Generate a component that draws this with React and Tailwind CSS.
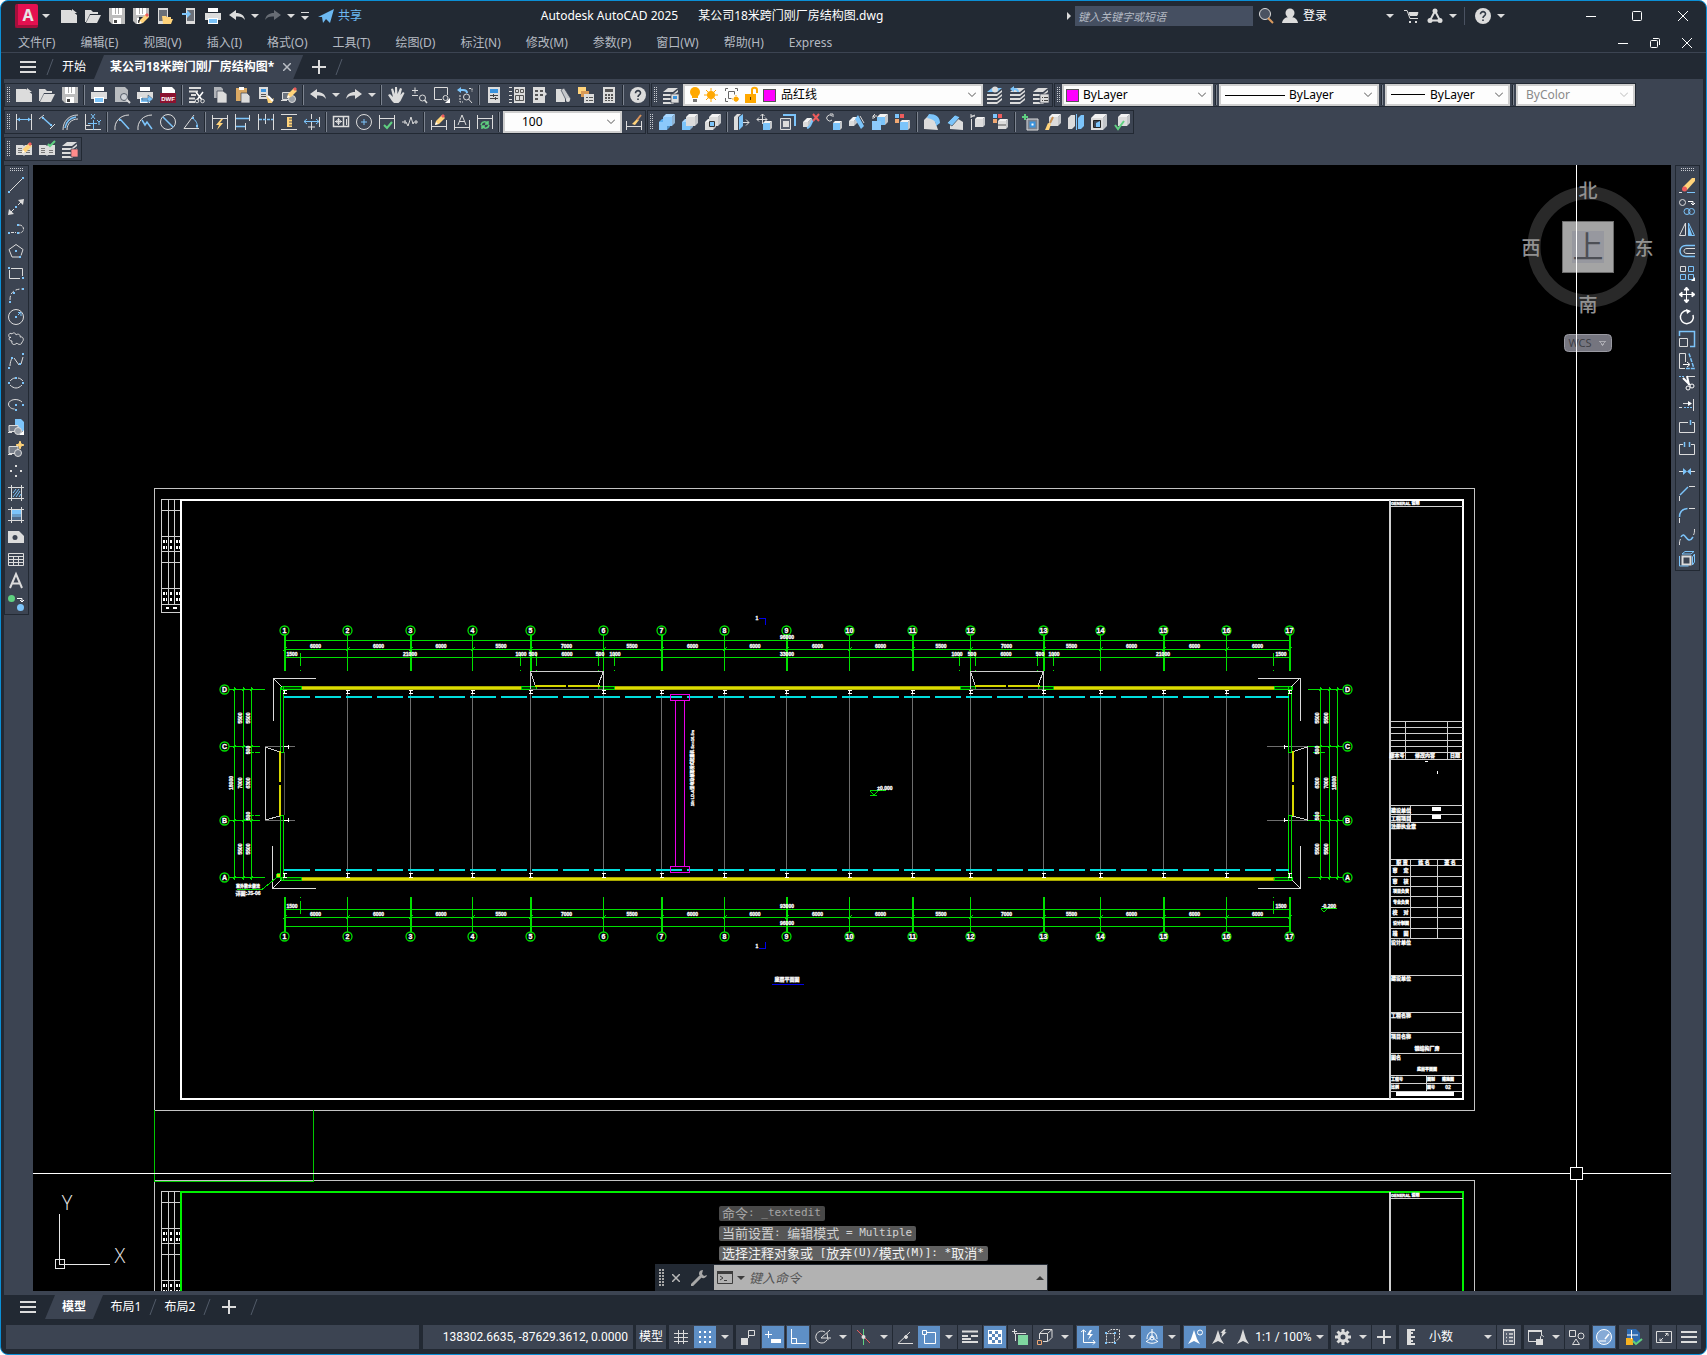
import { useState } from "react";
import clsx from "clsx";

const L = "#dcdcdc";
const B = "#7cc4fa";
const Y = "#ffd37a";
const R = "#ee5c5c";
const G = "#5fd080";
const D = "#3c4452";

/* ---------- icon building blocks ---------- */

function Cube({ x = 1, y = 4, s = 9, d = 4, c = L, side = "#f2f2f2" }) {
  return (
    <g stroke="none">
      <path d={`M${x} ${y}h${s}v${s}h${-s}z`} fill={c} />
      <path d={`M${x} ${y}l${d} ${-d}h${s}l${-d} ${d}z`} fill={side} />
      <path d={`M${x + s} ${y}l${d} ${-d}v${s}l${-d} ${d}z`} fill={side} opacity="0.75" />
    </g>
  );
}

function Stack({ top = L }) {
  return (
    <g stroke="none" fill={L}>
      <path d="M5 1h10l-5 4H0z" fill={top} />
      <path d="M0 7h10l5-4v2l-5 4H0z" />
      <path d="M0 11h10l5-4v2l-5 4H0z" />
      <path d="M0 15h10l5-4v2l-5 4H0z" />
    </g>
  );
}

function Pencil() {
  return (
    <g stroke="none">
      <path d="M6 12l1-4 6-6 3 3-6 6z" fill={Y} />
      <path d="M12 3l2-2 2 2-2 2z" fill={R} />
      <path d="M6 12l1-3 2 2z" fill="#fff" />
    </g>
  );
}

function Dots({ at, c = B }) {
  return at.map(([x, y]) => <path key={`${x}-${y}`} d={`M${x - 1} ${y - 1}h2v2h-2z`} fill={c} stroke="none" />);
}

const printer = (
  <g stroke="none">
    <path d="M3 0h10v4H3z" fill="#fff" />
    <path d="M0 5h16v7H0z" fill={L} />
    <path d="M3 10h10v6H3z" fill="#fff" />
    <path d="M4 11h8v4H4z" fill={B} />
  </g>
);

const disk = (
  <g stroke="none">
    <path d="M0 0h16v16H3l-3-3z" fill="#bdbdbd" />
    <path d="M3 0h10v7H3z" fill="#fff" />
    <path d="M6 0h1v6H6zM9 0h1v6H9z" fill="#aaa" />
    <path d="M4 10h8v6H4z" fill="#fff" />
    <path d="M5 12h3v3H5z" fill="#444" />
  </g>
);

const lens = (
  <g>
    <circle cx="10" cy="10" r="3.5" fill="#cfd3d8" stroke="#555d69" />
    <path d="M12.500 12.500L16 16" strokeWidth="2" />
  </g>
);

const bracket = <path d="M.5 1v14M15.500 1v14M1 4.500h14" />;

const ICONS = {
  new: <path d="M0 2h10l6 5v8H0z M11 1l5 4h-5z" fill={L} stroke="none" />,
  open: <path d="M0 2h6l2 2h5v2H5l-4 8H0z M5 7h11l-4 8H1z" fill={L} stroke="none" />,
  save: disk,
  saveAs: (
    <g>
      {disk}
      <path d="M6 9h10v7H6z" fill="#222933" stroke="none" />
      <g transform="translate(0 4)"><Pencil /></g>
    </g>
  ),
  openPhone: (
    <g stroke="none">
      <path d="M1 0h10v16H1z" fill={L} />
      <path d="M2 2h8v11H2z" fill="#6b7078" />
      <path d="M5 8h4l1 1h4v2h2l-2 5H6z" fill={Y} />
    </g>
  ),
  savePhone: (
    <g stroke="none">
      <path d="M5 0h9v16H5z" fill={L} />
      <path d="M6 2h7v11H6z" fill="#6b7078" />
      <path d="M1 5h5V2l4 4-4 4V7H1z" fill={B} />
    </g>
  ),
  print: printer,
  preview: <g><path d="M1 0h10l3 3v12H1z" fill="#b9bcc0" stroke="none" />{lens}</g>,
  publish: <g>{printer}<path d="M5 11h6V8l5 4-5 4v-3H5z" fill={B} stroke={D} strokeWidth=".5" /></g>,
  dwf: (
    <g stroke="none">
      <path d="M2 0h10l3 3v6H2z" fill="#fff" />
      <path d="M0 6h16v10H0z" fill="#8b1230" />
      <text x="8" y="14" textAnchor="middle" fontSize="6" fontWeight="700" fill="#fff" fontFamily="Liberation Sans">DWF</text>
    </g>
  ),
  cut: (
    <g>
      <path d="M0 1h12M0 4.500h9M2 8h5M0 11.500h6M0 15h6" strokeWidth="2" />
      <path d="M7 5l6 8M14 5l-6 8" stroke="#fff" strokeWidth="1.500" />
      <circle cx="8" cy="14" r="1.800" /><circle cx="13.500" cy="14" r="1.800" />
    </g>
  ),
  copy: <g stroke="none"><path d="M2 0h7l2 2v9H2z" fill="#b0b3b8" /><path d="M5 4h6l4 3v9H5z" fill={L} stroke={D} strokeWidth=".7" /></g>,
  paste: <g stroke="none"><path d="M1 1h11v13H1z" fill="#dba964" /><path d="M4 0h5v3H4z" fill="#fff" /><path d="M6 6h6l3 3v7H6z" fill={L} stroke={D} strokeWidth=".7" /></g>,
  match: <g stroke="none"><path d="M1 0h9v12H1z" fill={L} /><path d="M3 2h5v3H3z" fill="#3a93dd" /><path d="M3 7h5v1H3zM3 9h5v1H3z" fill="#555" /><path d="M8 8l5 5 3-2-2 5h-4z" fill={Y} /><path d="M10 9l5 5" stroke="#fff" strokeWidth="2" /></g>,
  blockEdit: <g><path d="M1.500 5.500h8v7h-8zM0 13.500h6" fill="#6d7480" /><circle cx="11" cy="12" r="3.500" fill="#9aa0a8" /><g transform="translate(0 -1)"><Pencil /></g></g>,
  undo: <path d="M7 2v3c5 0 8 2 9 7-2-3-5-4-9-3.500V12L0 7z" fill={L} stroke="none" />,
  redo: <path d="M9 2v3C4 5 1 7 0 12c2-3 5-4 9-3.500V12l7-5z" fill={L} stroke="none" />,
  redoOff: <path d="M9 2v3C4 5 1 7 0 12c2-3 5-4 9-3.500V12l7-5z" fill="#676c74" stroke="none" />,
  pan: <path d="M4 14L0 8l2-1 3 3-2-8 2-.5L7 7V0h2l.5 7L12 1l2 .7L12.500 8 15 5l1.500 1-4 8-2 2H6z" fill={L} stroke="none" />,
  zoomRt: <g><path d="M1 3.500h6M4 .5v6M1 8.500h6" /><circle cx="11.500" cy="11" r="3" /><path d="M13.500 13L16 16" strokeWidth="1.500" /></g>,
  zoomWin: <g><path d="M8 12.500H.5V.5h13V8" /><circle cx="11.500" cy="11" r="2.500" /><path d="M16 11v5h-5z" fill="#fff" stroke="none" /></g>,
  zoomPrev: <g><path d="M1 3h5c3 0 4 1 4 3" stroke={B} strokeWidth="2" /><path d="M0 3l4-3v6z" fill={B} stroke="none" /><path d="M3 8v7h3M12 1.500h3V5" strokeDasharray="2 1" /><circle cx="9.500" cy="10" r="3" /><path d="M11.500 12L15 16" /></g>,
  props: <g stroke="none"><path d="M2 0h12v16H2z" fill={L} /><path d="M4 2h8v4H4z" fill="#3a93dd" /><path d="M4 8h8v1H4zM4 11h8v1H4zM7 7h1v3H7zM9 10h1v3H9z" fill="#444" /></g>,
  design: <g><path d="M3 .5H0M3 4.500H0M3 8.500H0M3 12.500H0M3 15.500H0" /><path d="M5 0h11v16H5z" fill={L} stroke="none" /><path d="M6.500 2.500h3v3h-3zM11.500 2.500h3v3h-3zM6.500 8.500h8v5h-8zM10.500 8.500v5" stroke="#555" /></g>,
  palettes: <g stroke="none"><path d="M1 0h12v5l2 2-2 2v7H1z" fill={L} /><path d="M3 3h3v2H3zM8 3h3v2H8zM3 7h3v2H3zM8 7h3v2H8zM3 11h3v2H3z" fill="#555" /></g>,
  sheetSet: <g stroke="none"><path d="M1 2h6l3 3v10H1z" fill={L} /><path d="M6 3l3-2 7 11-4 3z" fill="#c6c8cb" stroke={D} strokeWidth=".7" /><circle cx="13" cy="13" r="2" fill={L} /></g>,
  markup: <g stroke="none"><path d="M0 0h8v7H0z" fill={Y} /><path d="M3 4h8v6H3z" fill="#d99a55" /><path d="M6 7h10v9H6z" fill={L} /><path d="M8 10h2v1H8zM11 10h4v1h-4zM8 13h2v1H8zM11 13h4v1h-4z" fill="#555" /></g>,
  calc: <g stroke="none"><path d="M2 0h12v16H2z" fill={L} /><path d="M4 2h8v3H4zM4 7h2v2H4zM7 7h2v2H7zM10 7h2v2h-2zM4 10h2v2H4zM7 10h2v2H7zM10 10h2v2h-2zM4 13h2v1H4zM7 13h2v1H7zM10 13h2v1h-2z" fill="#555" /></g>,
  help: <g stroke="none"><circle cx="8" cy="8" r="8" fill={L} /><path d="M5.500 6.200C5.500 2.700 10.700 3 10.500 6 10.400 8 8 7.800 8 10" stroke="#333b47" strokeWidth="1.600" fill="none" /><path d="M7.200 11.500h1.600v1.600H7.200z" fill="#333b47" /></g>,

  layerProps: <g><Stack /><path d="M8 7h8v9H8z" fill={L} stroke={D} strokeWidth=".7" /><path d="M10 9h4v3h-4z" fill="#3a93dd" stroke="none" /></g>,
  layerCurrent: <g><Stack top={B} /><circle cx="8" cy="2.500" r="3" fill={L} stroke="none" /></g>,
  layerPrev: <g><Stack /><path d="M8 5c0-2-2-3-4-3" stroke={B} strokeWidth="2" /><path d="M0 2l4-3v6z" fill={B} stroke="none" /></g>,
  layerStates: <g><Stack /><path d="M7 7h9v9H7z" fill={L} stroke={D} strokeWidth=".7" /><path d="M9 10.500h1M11 10.500h4M9 13.500h1M11 13.500h4" stroke="#444" /></g>,

  dimLinear: <g><path d="M.5 0v16M15.500 0v16" /><path d="M1 5.500h14" stroke={B} /><path d="M1 5.500l3-2v4zM15 5.500l-3-2v4z" fill={B} stroke="none" /></g>,
  dimAligned: <g><path d="M5 1L0 5M16 10l-5 5" /><path d="M3 3l10 9" stroke={B} strokeWidth="1.500" /><Dots at={[[4, 4], [12, 11]]} /></g>,
  dimArc: <g><path d="M1 16C1 7 7 1 16 1M5 16c0-6 4-11 11-11" /><path d="M3 14c1-6 5-10 11-11" stroke={B} strokeWidth="1.500" /></g>,
  dimOrd: <g><path d="M.5 0v15.500H16M.5 11.500h5" /><path d="M8.500 6v10M3 9.500h9M6 0l4 5M10 0L6 5M12 6l2 2 2-2M14 8v3" stroke={B} /></g>,
  dimRadius: <g><path d="M1 16C0 8 6 1 15 1" /><path d="M6 5l9 10" stroke={B} strokeWidth="1.500" /><Dots at={[[6, 6]]} /></g>,
  dimJog: <g><path d="M1 16C0 8 6 1 15 1" /><path d="M5 6l3 5 2-3 5 7" stroke={B} strokeWidth="1.500" /></g>,
  dimDia: <g><circle cx="8" cy="8" r="7.500" /><path d="M3 3l10 10" stroke={B} strokeWidth="1.500" /></g>,
  dimAngular: <g><path d="M11 1L1 14.500h15" /><path d="M9 4c4 2 6 6 5 10" stroke={B} /><Dots at={[[10, 4], [14, 12]]} /></g>,
  dimQuick: <g>{bracket}<path d="M9 5l-5 6h3l-2 5 6-7H8l3-4z" fill={Y} stroke="none" /></g>,
  dimBase: <g><path d="M.5 0v16M14.500 1v6M10.500 9v7" /><path d="M1 4.500h13M1 12.500h9" stroke={B} strokeWidth="1.500" /></g>,
  dimCont: <g><path d="M.5 0v16M7.500 0v10M15.500 0v16" /><path d="M1 5.500h14" stroke={B} strokeDasharray="3 1" strokeWidth="1.500" /></g>,
  dimSpace: <g><path d="M0 .5h16M0 15.500h16" /><path d="M6 3h5v10H6z" fill={Y} stroke="none" /><path d="M8 5h3M8 8h3M8 11h3" stroke="#555" /></g>,
  dimBreak: <g><path d="M7.500 0v5M7.500 8v8M15.500 3v10M4 13h7" /><path d="M0 7.500h15M3 5l-3 2.500L3 10M12 5l3 2.500-3 2.500" stroke={B} /></g>,
  tolerance: <g><path d="M.5 2.500h15v10H.5zM10.500 3v9" strokeWidth="1.500" /><circle cx="5.500" cy="7.500" r="2" /><path d="M2 7.500h7M5.500 4v7M13.500 5v6" /></g>,
  center: <g><circle cx="8" cy="8" r="7.500" /><path d="M8 5v6M5 8h6" stroke={B} /></g>,
  inspect: <g>{bracket}<path d="M5 11l3 3 5-6" stroke={G} strokeWidth="2" /></g>,
  jogLine: <path d="M0 8h4l2 4 3-9 2 7 1-2h4M3 6v4M14 6v4" />,
  dimEdit: <g><path d="M.5 6v10M15.500 6v10M1 12.500h14" /><g transform="translate(-2 -1)"><Pencil /></g></g>,
  dimText: <g><path d="M.5 6v10M15.500 6v10M1 13.500h14M4 11l4-10 4 10M5.500 7.500h5" /></g>,
  dimUpdate: <g>{bracket}<path d="M4 11c1-4 5-4 7-1M12 11c-1 4-5 4-7 1M11 7v3H8M5 15v-3h3" stroke={G} strokeWidth="1.500" /></g>,
  dimStyle: <g><path d="M.5 7v9M15.500 7v9M1 12.500h14" /><path d="M6 10l5-5 2 1-4 5z" fill={Y} stroke="none" /><path d="M11 6l4-5" stroke="#d9935a" strokeWidth="2" /></g>,

  union: <g><Cube x={0} y={8} s={8} d={3} c="#8cc9fb" side="#5aaef0" /><Cube x={4} y={3} s={9} d={3} c="#8cc9fb" side="#a9d8ff" /></g>,
  subtract: <g><Cube x={0} y={8} s={8} d={3} c={B} side="#a9d8ff" /><Cube x={4} y={3} s={9} d={3} /></g>,
  intersect: <g><Cube x={0} y={8} s={8} d={3} /><Cube x={4} y={3} s={9} d={3} /><path d="M4.500 7.500h5v5h-5z" fill={B} stroke="#333" /></g>,
  extrudeFace: <g stroke="none"><path d="M0 3l3-3h4L4 3v13H0z" fill={L} /><path d="M5 3l4-3v12l-4 4z" fill={B} /><path d="M9 8.500h6M12 5.500l3 3-3 3" stroke={L} /></g>,
  moveFace: <g><path d="M5.500 0v10M0 5.500h10M3.500 2l2-2 2 2M8 3.500l2 2-2 2M2 3.500l-2 2 2 2" /><Cube x={6} y={9} s={7} d={2} c={B} /></g>,
  offsetFace: <g><path d="M.5 4.500h10v11H.5z" fill="#596170" /><path d="M3 7h6v6H3z" fill={L} stroke="none" /><path d="M3 1h12v11" stroke={B} strokeWidth="2" /></g>,
  deleteFace: <g><Cube x={0} y={8} s={5} d={4} /><path d="M4 14c4-1 4-6 6-8" stroke={B} strokeWidth="2" /><path d="M10 0l6 7M16 0l-6 7" stroke={R} strokeWidth="2" /></g>,
  rotateFace: <g><path d="M6 2a3 3 0 1 0 0 4M4 0h3v3" /><Cube x={7} y={9} s={7} d={2} c={B} /></g>,
  taperFace: <g><Cube x={0} y={7} s={5} d={4} /><path d="M6 5l3-4 6 11-3 3z" fill={B} stroke="none" /><path d="M11 2l4 7" /></g>,
  copyFace: <g><Cube x={5} y={3} s={8} d={3} c={B} /><Cube x={0} y={7} s={9} d={0} c="#8cc9fb" /><path d="M5 2H1v3M3 0L1 2l2 2" /></g>,
  colorFace: <g><path d="M0 0h4v4H0z" fill={B} stroke="none" /><path d="M5 0h4v4H5z" fill={R} stroke="none" /><path d="M0 5h4v4H0z" fill="#f0a873" stroke="none" /><Cube x={5} y={8} s={8} d={2} c={B} /></g>,
  filletEdge: <g stroke="none"><path d="M0 15V6l5-5 5 3 4 12z" fill={L} /><path d="M5 0c7 0 11 3 11 9l-4 3C12 7 9 5 3 4z" fill={B} /></g>,
  chamferEdge: <g stroke="none"><path d="M3 15V7l5-4 8 5v8z" fill={L} /><path d="M0 9l8-8 5 2-8 9z" fill={B} stroke="#333" strokeWidth=".6" /></g>,
  copyEdge: <g><path d="M1.500 5v11M5 1L1 3M5 2H1M1 0v4" /><Cube x={5} y={5} s={8} d={2} /></g>,
  colorEdge: <g><path d="M0 0h4v4H0z" fill={B} stroke="none" /><path d="M5 0h4v4H5z" fill={R} stroke="none" /><path d="M0 5h4v4H0z" fill="#f0a873" stroke="none" /><Cube x={5} y={7} s={8} d={2} /><path d="M5 11h8" stroke="#555" /></g>,
  imprint: <g><path d="M5 5h11v11H5z" fill="#7b828e" stroke={L} /><path d="M8.500 8.500h4v4h-4z" fill="#fff" stroke="#3a93dd" strokeWidth="2" /><path d="M3 0v6M0 3h6" stroke={G} strokeWidth="2" /></g>,
  clean: <g><Cube x={4} y={3} s={9} d={3} /><path d="M3 9l3 1-2 6H0z" fill={Y} stroke="none" /><path d="M5 9l3-6" stroke="#c89052" strokeWidth="2" /></g>,
  separate: <g stroke="none"><path d="M0 4l3-3h4v11l-3 3H0z" fill={L} /><path d="M10 4l3-3h3v11l-3 3h-3z" fill={B} /><path d="M8.500 0v16" stroke={B} /></g>,
  shell: <g><Cube x={0} y={4} s={12} d={4} /><path d="M2.500 6.500h7v7h-7z" fill={D} stroke="#222" /><path d="M5 9l4-2v6H5z" fill={B} stroke="none" /></g>,
  check: <g><Cube x={4} y={3} s={9} d={3} /><path d="M1 11l3 4 6-8" stroke={G} strokeWidth="2" /></g>,

  bookEdit: <g><path d="M0 4h7l1 1 1-1h7v10H9l-1 1-1-1H0z" fill={L} stroke="none" /><path d="M2 7.500h4M2 9.500h4M2 11.500h4M10 9.500h4M10 11.500h4" stroke="#777" /><Pencil /></g>,
  bookCheck: <g><path d="M0 4h7l1 1 1-1h7v10H9l-1 1-1-1H0z" fill={L} stroke="none" /><path d="M2 7.500h4M2 9.500h4M2 11.500h4M10 9.500h4M10 11.500h4" stroke="#777" /><path d="M9 3l2 2 5-5" stroke={G} strokeWidth="2" /></g>,
  layerDelete: <g><Stack /><path d="M9 8h7v8H9z" fill="#ff8c8c" stroke={D} strokeWidth=".7" /></g>,

  line: <g><path d="M2 14L14 2" /><Dots at={[[1, 15], [15, 1]]} /></g>,
  xline: <g><path d="M2 14l4-4M10 6l4-4" /><path d="M0 16l1-6 5 5zM16 0l-6 1 5 5z" fill={L} stroke="none" /><Dots at={[[8, 8]]} /></g>,
  pline: <g><path d="M3 11.500h5M11 4c6 0 6 8 0 8" strokeDasharray="3 1" /><Dots at={[[1, 12], [10, 12], [10, 4]]} /></g>,
  polygon: <g><path d="M8 1.500l7 5-2 6M11 14H4L1 6.500l7-5" /><Dots at={[[8, 8], [12, 14]]} /></g>,
  rect: <g><path d="M3 3.500h11.500V11M12 13.500H1.500V5" /><Dots at={[[1, 3], [15, 13]]} /></g>,
  arc: <g><path d="M2 13c0-9 6-11 12-11" strokeDasharray="4 2" /><Dots at={[[2, 15], [6, 6], [15, 2]]} /></g>,
  circle: <g><circle cx="8" cy="8" r="7.500" /><path d="M10 6l3-3M10 3.500h3V7" stroke={B} /><Dots at={[[8, 8]]} /></g>,
  cloud: <path d="M2 7C-1 4 2 1 4 3c1-2 4-1 4 1 2-2 5 0 4 2 4-1 4 4 2 5 0 3-4 3-5 1-3 3-6 1-5-2-3 0-4-3-1-4z" />,
  spline: <g><path d="M2 13c0-3 1-6 2-8M6 5l5 7M13 11l2-7" /><Dots at={[[1, 15], [4, 5], [12, 11], [15, 1]]} /></g>,
  ellipse: <g><path d="M2 6c1-1 3-3 5-3M10 3c2 0 4 2 5 3M2 10c4 4 8 4 12 0" /><Dots at={[[8, 3], [1, 8], [15, 8]]} /></g>,
  ellipseArc: <g><path d="M14 5C10 1 1 2 .5 7c0 3 3 5 6 5" /><Dots at={[[8, 8], [15, 8], [8, 13]]} /></g>,
  insertBlock: <g><path d="M7 0h6l3 3v9H7z" fill={B} stroke="none" /><path d="M1 6.500h9v6H1zM0 13.500h4" fill="#777e8a" /><circle cx="10" cy="12" r="3.500" fill="#9aa0a8" /><path d="M16 11v5h-5z" fill="#fff" stroke="none" /></g>,
  makeBlock: <g><path d="M1 5.500h9v7H1zM0 13.500h4" fill="#777e8a" /><circle cx="10" cy="12" r="3.500" fill="#777e8a" /><path d="M12 0l1 3 3 1-3 1-1 3-1-3-3-1 3-1z" fill={Y} stroke={Y} /></g>,
  point: <Dots c={L} at={[[8, 3], [3, 8], [13, 8], [8, 13]]} />,
  hatch: <g><path d="M3.500 0v16M13.500 0v16M0 2.500h16M0 13.500h16" /><path d="M5 8l3-4M5 12l6-8M8 12l4-6M11 12l2-3" stroke={B} /></g>,
  gradient: <g><path d="M3.500 0v16M13.500 0v16M0 2.500h16M0 13.500h16" /><path d="M4 3h9v4H4z" fill={B} stroke="none" /><path d="M4 7h9v3H4z" fill="#6a9cc6" stroke="none" /><path d="M4 10h9v3H4z" fill="#4f6a88" stroke="none" /></g>,
  region: <g stroke="none"><path d="M0 2h11l5 5v7H0z" fill={L} /><circle cx="7" cy="8.500" r="2.500" fill={D} /></g>,
  table: <path d="M.5 2.500h15v12H.5zM0 5.500h16M0 8.500h16M0 11.500h16M5.500 5v9M10.500 5v9" />,
  mtext: <path d="M2 15L8 1l6 14M4.500 10.500h7" strokeWidth="2" />,
  addSel: <g><circle cx="3.500" cy="3.500" r="3.500" fill={G} stroke="none" /><circle cx="12.500" cy="12.500" r="3.500" fill={B} stroke="none" /><path d="M9 3.500h5V7M12 5l2 2 2-2" stroke="#fff" /></g>,

  erase: <g><path d="M4 10l9-9 3 0v3l-8 9z" fill={Y} stroke="none" /><circle cx="5.500" cy="12" r="2.500" fill={R} stroke="none" /><path d="M0 15.500h3" /><path d="M8 15.500h8" stroke={B} /></g>,
  copyObj: <g><circle cx="3.500" cy="3.500" r="3" /><path d="M9 2.500h5V6M12 4l2 2 2-2" stroke="#fff" /><circle cx="8" cy="12.500" r="3" stroke={B} /><circle cx="12.500" cy="12.500" r="3" stroke={B} /></g>,
  mirror: <g><path d="M6.500 2v12.500H.5z" /><path d="M9.500 2v12.500h6z" stroke={B} /><path d="M9.500 4v11h4z" fill={B} stroke="none" /></g>,
  offset: <g><path d="M16 5.500H8c-4 0-4 5 0 5h8" /><path d="M16 2.500H7c-8 0-8 11 0 11h9" stroke={B} strokeWidth="1.500" /></g>,
  array: <g><path d="M1.500 1.500h5v5h-5z" /><path d="M9.500 1.500h5v5h-5zM1.500 9.500h5v5h-5zM9.500 9.500h5v5h-5z" stroke={B} /><path d="M16 12v4h-4z" fill="#fff" stroke="none" /></g>,
  move: <path d="M7.500 2v12M2 7.500h12M5 3l2.500-3L10 3zM5 13l2.500 3 2.500-3zM3 5L0 7.500 3 10zM13 5l3 2.500-3 2.500z" stroke="#fff" fill="#fff" />,
  rotate: <g><path d="M10 2a6.500 6.500 0 1 0 4 4" strokeWidth="1.500" stroke="#fff" /><path d="M7 0l5 2-4 3z" fill="#fff" stroke="none" /></g>,
  scale: <g><path d="M.5 7.500h8v8h-8z" /><path d="M.5 5V.5h15v15H11" stroke={B} strokeWidth="1.500" /></g>,
  stretch: <g><path d="M6 15.500H.5V.5h6V9" /><path d="M10 .5l5 15H7" stroke={B} strokeDasharray="4 1" strokeWidth="1.500" /><path d="M4 11.500h6M8 9l3 2.500L8 14" stroke="#fff" /></g>,
  trim: <g><path d="M0 1.500h6" stroke={B} strokeDasharray="2 1" /><path d="M9 1.500h7" /><path d="M8 1l2 9M4 3l7 7" stroke="#fff" strokeWidth="2" /><circle cx="9" cy="13" r="2" stroke="#fff" /><circle cx="13" cy="11" r="2" stroke="#fff" /></g>,
  extend: <g><path d="M14.500 2v12M0 10.500h3M4 6.500h8" /><path d="M5 10.500h9" stroke={B} strokeDasharray="2 1" /><path d="M9 4l4 2.500L9 9z" fill="#fff" stroke="none" /></g>,
  breakAt: <g><path d="M9 3.500H.5v10h15v-10H13" /><path d="M11.500 1v5" stroke={B} strokeWidth="1.500" /></g>,
  breakObj: <g><path d="M4 3.500H.5v10h15v-10H12" /><path d="M5.500 1v5M10.500 1v5" stroke={B} strokeWidth="1.500" /></g>,
  join: <g><path d="M0 8.500h4M12 8.500h4" /><path d="M4 5l4 3.500L4 12zM12 5L8 8.500l4 3.500z" fill={B} stroke="none" /></g>,
  chamfer: <g><path d="M10 1.500h6M.5 11v5" /><path d="M1 10l8-8" stroke={B} strokeWidth="1.500" /></g>,
  fillet: <g><path d="M10 1.500h6M.5 11v5" /><path d="M.5 10c0-5 3-8 8-8.500" stroke={B} strokeWidth="1.500" /></g>,
  blend: <g><path d="M.5 16c0-3 0-4 1-6M15.500 0c0 3 0 4-1 6" /><path d="M2 8c4-8 6 10 12 0" stroke={B} strokeWidth="1.500" /></g>,
  explode: <g><path d="M3.500 5.500h8v8h-8z" strokeWidth="2" /><path d="M.5 5v10h9M3 3l3-2.500h9L12 3zM15.500 3v8l-2 3V6z" stroke={B} /></g>,

  plane: <path d="M0 9L16 1l-4 14-4-4-3 4-1-6z M4 9l10-6-7 8z" fill="#6db9f2" stroke="none" />,
  search: <g><circle cx="7" cy="6" r="5.500" fill="#4a5261" /><path d="M10 10l5 5" stroke="#d99a5f" strokeWidth="2" /></g>,
  user: <g stroke="none" fill={L}><circle cx="8" cy="5" r="4.500" /><path d="M0 15c1-5 4-6 8-6s7 1 8 6z" /></g>,
  cart: <g><path d="M0 2.500h3l3 8h8" /><path d="M5 4.500h9l-1 3H6z" fill={L} /><path d="M5 13h2v2H5zM11 13h2v2h-2z" fill={L} stroke="none" /></g>,
  apps: <g><path d="M8 3L3 12.500h10z" strokeWidth="2" /><g stroke="none" fill={L}><circle cx="8" cy="3" r="2.500" /><circle cx="3" cy="12.500" r="2.500" /><circle cx="13" cy="12.500" r="2.500" /></g></g>,
  min: <path d="M3 8.500h10" stroke="#fff" />,
  max: <rect x="3.500" y="3.500" width="9" height="9" rx="1" stroke="#fff" />,
  restore: <g stroke="#fff"><rect x="3.500" y="5.500" width="7" height="7" rx="1" /><path d="M6 3.500h5.500a1 1 0 0 1 1 1V10" /></g>,
  close: <path d="M3 3l10 10M13 3L3 13" stroke="#fff" />,
  menu: <path d="M0 3h16M0 8h16M0 13h16" strokeWidth="2" />,
  plus: <path d="M1 8h14M8 1v14" strokeWidth="2" />,

  grid: <path d="M5.500 1v14M10.500 1v14M1 4.500h14M1 8.500h14M1 12.500h14" />,
  snap: <Dots c="#fff" at={[[3, 3], [8, 3], [13, 3], [3, 8], [8, 8], [13, 8], [3, 13], [8, 13], [13, 13]]} />,
  infer: <g><path d="M1 9h7v7H1z" fill={L} stroke="none" /><path d="M8.500 9V1.500h6v5h-6" /></g>,
  dyn: <g stroke="#fff"><path d="M0 5.500h7M3.500 2v7" /><path d="M6 10h10v4H6z" fill="#fff" stroke="none" /></g>,
  ortho: <path d="M1.500 0v14.500H16M1.500 9.500h5v5" stroke="#fff" />,
  polar: <g><path d="M10 3a6 6 0 1 0 2 8" /><path d="M6 9L15 1M6 9h10M12 4l1 7" /></g>,
  iso: <g><path d="M7.500 0v16" stroke={G} /><path d="M1 1l13 13" stroke={R} /><circle cx="7.500" cy="8" r="2" fill={L} stroke="none" /></g>,
  track: <g><path d="M13 3L1 14.500h15" /><circle cx="9" cy="8" r="1.500" fill={L} /></g>,
  osnap: <g stroke="#fff"><path d="M1.500 1.500h4v4h-4z" /><path d="M6 3.500h8.500v11h-11V6" /></g>,
  lweight: <path d="M0 2.500h16M0 7h6M9 7h7M0 13h16M0 10h9" strokeWidth="2" />,
  transp: <g><path d="M1 1h14v14H1z" fill="#fff" stroke="none" /><path d="M2 2h3v3H2zM8 2h3v3H8zM5 5h3v3H5zM11 5h3v3h-3zM2 8h3v3H2zM8 8h3v3H8zM5 11h3v3H5zM11 11h3v3h-3z" fill="#5a86ba" stroke="none" /></g>,
  cycling: <g><path d="M6 6h10v10H6z" fill="#7fd6a0" stroke="none" /><path d="M2.500 0v5M0 2.500h5M3.500 12V4.500H14" /></g>,
  osnap3d: <g><path d="M2.500 10V4.500h8v8H6M3 4l4-3.500h8v8l-4 4M11 4l4-3.500" /><path d="M.5 11.500h4v4h-4z" stroke="#f0a873" /></g>,
  ducs: <g stroke="#fff"><path d="M3.500 1v12.500H15M1 3l2.500-2L6 3M13 11l2 2.500-2 2" /><path d="M10 1L7 6h3l-2 5 5-6h-3l2-4z" fill="#fff" stroke="none" /></g>,
  filter: <g><path d="M2.500 4.500h8v9h-8zM4 3l3-2.500h8.500M15.500 1v8L12 12" strokeDasharray="2 1" /><Dots at={[[2, 4], [11, 4], [2, 14], [11, 14]]} /></g>,
  gizmo: <g stroke="#fff"><path d="M8 0v8l-6 5M8 8l6 5M8 3C5 3 3 6 3 10M8 3c3 0 5 3 5 7M2 12c3 3 9 3 12 0" /><circle cx="8" cy="9" r="2" /></g>,
  annVis: <g><path d="M7 1l3 9 3 5-6-3-6 3 3-5z" fill="#fff" stroke="none" /><circle cx="13" cy="3.500" r="2.500" stroke="#fff" /></g>,
  annAuto: <g><path d="M7 1l3 9 3 5-6-3-6 3 3-5z" fill={L} stroke="none" /><path d="M13 0l-4 4h2l-1 5 6-6h-2l1-3z" fill={L} stroke={D} strokeWidth=".5" /></g>,
  annScale: <path d="M8 0l3 10 3 5-6-3-6 3 3-5z" fill={L} stroke="none" />,
  gear: <g><circle cx="8" cy="8" r="4" strokeWidth="3" /><path d="M8 0v3M8 13v3M0 8h3M13 8h3M2.500 2.500l2 2M11.500 11.500l2 2M13.500 2.500l-2 2M4.500 11.500l-2 2" strokeWidth="3" /></g>,
  ruler: <g><path d="M4 0h4v16H4z" fill={L} stroke="none" /><path d="M8 1h4M8 4h2M8 8h4M8 12h2M8 15h4" strokeWidth="2" /></g>,
  quick: <g><path d="M2.500 .5h11v15h-11z" fill="#596170" /><path d="M5 5h1M8 5h4M5 8.500h1M8 8.500h4M5 12h1M8 12h4" strokeWidth="1.500" /><path d="M2 1h12" strokeWidth="2" /></g>,
  lockUi: <g><path d="M8 12.500H.5V1.500h13V6" /><path d="M0 2h14" strokeWidth="2" /><path d="M8 10h7v6H8z" fill={L} stroke="none" /><path d="M12.500 10V8c0-2 3-2 3 0" /></g>,
  isolate: <g><path d="M.5 1.500h6v6h-6z" /><circle cx="12" cy="7" r="3" /><path d="M7 10l3.500 5.500h-7z" /></g>,
  perf: <g stroke="#fff"><circle cx="8" cy="8" r="7.500" fill="#86aad6" /><path d="M3 12h7" /><path d="M9 10l4-5" strokeWidth="1.500" /></g>,
  notice: <g stroke="none"><path d="M1 0h9l4 4v9H1z" fill="#2e6ab0" /><path d="M0 9h7v7H0z" fill="#f6b221" /><path d="M1 6h11M5.500 1v9" stroke="#fff" /><path d="M7 12l3 3 6-5" stroke={G} strokeWidth="2" fill="none" /></g>,
  fullView: <g><path d="M.5 2.500h15v11H.5z" /><path d="M9 7l3-3M9.500 4.500H12V7M7 9l-3 3M4 9.500V12h2.500" /></g>,
};

function Icon({ name }) {
  return (
    <svg viewBox="0 0 16 16" className="size-4 shrink-0 overflow-visible" fill="none" stroke={L} aria-hidden="true">
      {ICONS[name]}
    </svg>
  );
}

function Arrow({ color = L, up = false }) {
  return (
    <svg viewBox="0 0 8 4" className="h-1 w-2 shrink-0" aria-hidden="true">
      <path d={up ? "M0 4L4 0l4 4z" : "M0 0h8L4 4z"} fill={color} />
    </svg>
  );
}

function Chevron({ dim }) {
  return (
    <svg viewBox="0 0 8 5" className="pointer-events-none absolute top-1/2 right-[5px] -mt-[3px] h-[5px] w-2" fill="none" stroke={dim ? "#bbb" : "#555"} aria-hidden="true">
      <path d="M0 .5l4 4 4-4" />
    </svg>
  );
}

function Tool({ name, className }) {
  return (
    <button type="button" aria-label={name} className={clsx("flex shrink-0 items-center justify-center", className)}>
      <Icon name={name} />
    </button>
  );
}

function Drop({ label = "more", className = "w-3" }) {
  return (
    <button type="button" aria-label={label} className={clsx("flex h-full shrink-0 items-center justify-center", className)}>
      <Arrow />
    </button>
  );
}

/* ---------- toolbars ---------- */

function Grip({ vertical }) {
  return (
    <svg className={vertical ? "h-2 w-[15px] self-center" : "h-4 w-[7px]"} aria-hidden="true">
      {vertical ? (
        <path d="M1 2.500h14M1 4.500h14" stroke="#c9ccd1" strokeDasharray="1 1" />
      ) : (
        <path d="M2.500 0v16M4.500 0v16" stroke="#c9ccd1" strokeDasharray="1 1" />
      )}
    </svg>
  );
}

function Bar({ items, children }) {
  return (
    <div role="toolbar" className="flex h-6 shrink-0 items-center border border-[#222933]">
      <Grip />
      {items && <Tools items={items} />}
      {children}
    </div>
  );
}

function Tools({ items }) {
  return items.split(" ").map((name, i) => {
    if (name === "|") return <span key={i} className="mx-[2px] h-5 w-[2px] border-l border-[#222933] bg-[#7d8490]" />;
    if (name === "v") return <Drop key={i} className="w-[13px]" />;
    return <Tool key={i} name={name} className="h-[22px] w-[23px]" />;
  });
}

function Combo({ label, value, className, pad, dim, children }) {
  return (
    <div className={clsx("relative h-[22px] shrink-0 border-2 border-[#cfcfcf] bg-[#fdfdfd]", className)}>
      <select aria-label={label} defaultValue={value} disabled={dim} className={clsx("block h-full w-full appearance-none bg-transparent text-xs opacity-100 outline-none", pad, dim ? "text-[#8a8a8a]" : "text-black")}>
        <option>{value}</option>
      </select>
      {children}
      <Chevron dim={dim} />
    </div>
  );
}

function LayerGlyphs() {
  return (
    <svg className="pointer-events-none absolute top-0 left-0 h-[18px] w-24" fill="none" aria-hidden="true">
      <circle cx="10" cy="6" r="5" fill="#ffa800" />
      <path d="M7 8h6v4H7z" fill="#ffa800" />
      <path d="M8 13h4v3H8z" fill="#777" />
      <circle cx="26" cy="9" r="4" fill="#ffa800" />
      <path d="M26 2v14M19 9h14M21 4l10 10M31 4L21 14" stroke="#ffa800" />
      <path d="M40.500 5V2.500H43M50 2.500h2.500V5M40.500 12v3.500H43M43.500 5.500v7h3M43.500 5.500h6v3" stroke="#666" />
      <circle cx="51" cy="13" r="2.500" fill="#ffa800" />
      <path d="M51 9v8M47 13h8" stroke="#ffa800" strokeDasharray="1 1" />
      <path d="M60 8h11v9H60z" fill="#ffa800" />
      <path d="M67 8V4c0-3 5-3 5 0v3" stroke="#ffa800" strokeWidth="2" />
      <path d="M65 11h1v3h-1z" fill="#5a3c00" />
      <rect x="78.500" y="3.500" width="12" height="12" fill="#ff00ff" stroke="#555" />
    </svg>
  );
}

function SideBar({ items }) {
  return (
    <div role="toolbar" className="flex w-[25px] shrink-0 flex-col self-start border border-[#222933]">
      <Grip vertical />
      {items.split(" ").map((name) => (
        <Tool key={name} name={name} className="h-[22px] w-[22px]" />
      ))}
    </div>
  );
}

/* ---------- title, menus and tabs ---------- */

const MENUS = ["文件(F)", "编辑(E)", "视图(V)", "插入(I)", "格式(O)", "工具(T)", "绘图(D)", "标注(N)", "修改(M)", "参数(P)", "窗口(W)", "帮助(H)", "Express"];

function TitleBar() {
  const quick = ["new", "open", "save", "saveAs", "openPhone", "savePhone", "print", "undo"];
  return (
    <header className="flex h-[30px] shrink-0 items-center pl-[14px]">
      <button type="button" aria-label="AutoCAD" className="flex h-6 w-[23px] items-center justify-center rounded-xs border-b-3 border-l-3 border-[#a60f3c] bg-[#e51050] text-base leading-none font-bold">
        A
      </button>
      <Drop className="mr-1 w-[15px]" />
      {quick.map((name) => (
        <Tool key={name} name={name} className="h-6 w-6" />
      ))}
      <Drop />
      <Tool name="redoOff" className="h-6 w-6" />
      <Drop />
      <button type="button" aria-label="customize" className="flex w-4 flex-col items-center gap-[3px]">
        <span className="h-px w-2 bg-[#dcdcdc]" />
        <Arrow />
      </button>
      <button type="button" className="ml-[5px] flex shrink-0 items-center gap-1 text-[#6db9f2]">
        <Icon name="plane" />
        共享
      </button>
      <h1 className="flex-1 truncate text-center whitespace-pre text-white">
        Autodesk AutoCAD 2025<span className="ml-5">某公司18米跨门刚厂房结构图.dwg</span>
      </h1>
      <span className="flex w-[13px] shrink-0 items-center justify-center">
        <svg viewBox="0 0 4 8" className="h-2 w-1" aria-hidden="true"><path d="M0 0l4 4-4 4z" fill={L} /></svg>
      </span>
      <input type="search" aria-label="搜索" placeholder="键入关键字或短语" className="h-5 w-[178px] bg-[#454f61] px-[3px] text-[11px] italic outline-none placeholder:text-[#b4bac4]" />
      <Tool name="search" className="h-6 w-[26px]" />
      <button type="button" className="flex w-[100px] shrink-0 items-center gap-[5px] pl-[3px] text-white">
        <Icon name="user" />
        登录
      </button>
      <Drop className="w-[22px]" />
      <Tool name="cart" className="h-6 w-[22px]" />
      <Tool name="apps" className="h-6 w-6" />
      <Drop />
      <span className="mr-[6px] ml-[5px] h-[18px] w-px bg-[#4a5261]" />
      <Tool name="help" className="h-6 w-6" />
      <Drop />
      <Tool name="min" className="ml-[61px] h-7 w-[46px]" />
      <Tool name="max" className="h-7 w-[46px]" />
      <Tool name="close" className="h-7 w-[46px]" />
    </header>
  );
}

function MenuBar() {
  return (
    <nav className="flex h-[22px] shrink-0 items-center gap-[25px] border-b border-[#3c4452] pt-0.5 pr-[3px] pl-[17px] text-[#b5bac2]">
      {MENUS.map((m) => (
        <button key={m} type="button" className="shrink-0">{m}</button>
      ))}
      <div className="ml-auto flex">
        <Tool name="min" className="h-[18px] w-8" />
        <Tool name="restore" className="h-[18px] w-8" />
        <Tool name="close" className="h-[18px] w-8" />
      </div>
    </nav>
  );
}

function Slash() {
  return (
    <svg viewBox="0 0 8 16" className="h-4 w-2 shrink-0" aria-hidden="true">
      <path d="M1 16L7 0" stroke="#525b69" />
    </svg>
  );
}

function FileTabs() {
  return (
    <div className="flex h-[26px] shrink-0 items-center pt-0.5 pl-[19px] text-white">
      <Tool name="menu" className="mr-[10px] w-4" />
      <Slash />
      <button type="button" className="ml-2 w-8 text-left">开始</button>
      <div className="flex h-full items-center bg-[#3c4452] pr-[10px] pl-4 [clip-path:polygon(10px_0,100%_0,calc(100%-10px)_100%,0_100%)]">
        <button type="button" className="font-bold">某公司18米跨门刚厂房结构图*</button>
        <button type="button" aria-label="close tab" className="ml-[7px] flex w-3 items-center justify-center">
          <svg viewBox="0 0 8 8" className="size-2" aria-hidden="true"><path d="M0 0l8 8M8 0L0 8" stroke="#b9bdc4" strokeWidth="1.500" /></svg>
        </button>
      </div>
      <Tool name="plus" className="mr-2 ml-2 w-4" />
      <Slash />
    </div>
  );
}

/* ---------- the plan drawing, in drawing-window pixels ---------- */

const AXES = [284, 347, 410, 472, 530, 603, 661, 724, 786, 849, 912, 970, 1043, 1100, 1163, 1226, 1289];
const BAYS = ["6000", "6000", "6000", "5500", "7000", "5500", "6000", "6000", "6000", "6000", "5500", "7000", "5500", "6000", "6000", "6000"];
const SUB_TICKS = [300, 520, 536, 598, 614, 959, 975, 1037, 1053, 1273];
const SUB_DIMS = [[292, "1500"], [410, "21000"], [521, "1000"], [533, "500"], [567, "6000"], [600, "500"], [615, "1000"], [787, "33000"], [957, "1000"], [972, "500"], [1006, "6000"], [1040, "500"], [1054, "1000"], [1163, "21000"], [1281, "1500"]];
const ROWS = [["D", 689], ["C", 746], ["B", 820], ["A", 877]];
const GREEN = "#00e000";

function T({ x, y, children, size = 5, rot, anchor = "middle" }) {
  return (
    <text x={x} y={y + 2} fontSize={size} textAnchor={anchor} fill="#fff" stroke="#fff" strokeWidth=".3" fontWeight="700" transform={rot ? `rotate(-90 ${x} ${y})` : undefined}>
      {children}
    </text>
  );
}

function Bubble({ x, y, children }) {
  return (
    <g>
      <circle cx={x + 0.5} cy={y + 0.5} r="4.500" fill="#000" stroke={GREEN} shapeRendering="auto" strokeWidth="1.300" />
      <T x={x + 0.5} y={y + 0.5} size={7}>{children}</T>
    </g>
  );
}

const SIGN_ROWS = [[870, "审", "定"], [881, "审", "核"], [891, "项目负责"], [902, "专业负责"], [912, "校", "对"], [923, "设计制图"], [933, "描", "图"]];

function SheetLabels() {
  return (
    <g>
      <T x={1397} y={755}>版本号</T>
      <T x={1425} y={755}>修改内容</T>
      <T x={1455} y={755}>日期</T>
      <T x={1401} y={810}>建设单位</T>
      <T x={1401} y={818}>工程项目</T>
      <T x={1391} y={826} anchor="start">注册执业章</T>
      <T x={1402} y={862}>职 责</T>
      <T x={1424} y={862}>姓 名</T>
      <T x={1450} y={862}>签 名</T>
      {SIGN_ROWS.map(([y, a, b]) => (b ? (
        <g key={y}><T x={1395} y={y}>{a}</T><T x={1406} y={y}>{b}</T></g>
      ) : (
        <T key={y} x={1401} y={y} size={4}>{a}</T>
      )))}
      <T x={1391} y={942} anchor="start">设计单位</T>
      <T x={1391} y={978} anchor="start">建设单位</T>
      <T x={1391} y={1015} anchor="start">工程名称</T>
      <T x={1391} y={1036} anchor="start">项目名称</T>
      <T x={1427} y={1048}>钢结构厂房</T>
      <T x={1391} y={1057} anchor="start">图名</T>
      <T x={1427} y={1069} size={4}>底层平面图</T>
      <T x={1391} y={1079} size={4} anchor="start">工程号</T>
      <T x={1431} y={1079} size={4}>图别</T>
      <T x={1448} y={1079} size={4}>建施图</T>
      <T x={1391} y={1087} size={4} anchor="start">比例</T>
      <T x={1431} y={1087} size={4}>图号</T>
      <T x={1448} y={1087}>02</T>
    </g>
  );
}

function Sheet({ dy = 0, frame = "#fff", labels }) {
  const bx = 1390;
  const h = [506, 721, 727, 733, 740, 746, 752, 759, 805, 814, 822, 859, 865, 876, 886, 896, 907, 917, 928, 938, 975, 1012, 1032, 1053, 1075, 1083, 1091];
  return (
    <g transform={`translate(0 ${dy})`} stroke="#d0d0d0">
      <path d="M154.500 488.500h1320v622H154.500z" stroke="#c4c4c4" />
      <path d="M161.500 499.500v113H181M161 499.500h20M168.500 500v104M174.500 500v104M161 510.500h20M161 536.500h20M161 551.500h20M161 562.500h20M161 588.500h20M161 604.500h20" />
      {[541, 547, 593, 599].map((y) => (
        <path key={y} d={`M163 ${y}h4M170 ${y}h3M176 ${y}h4`} stroke="#fff" strokeWidth="3" strokeDasharray="2 1" />
      ))}
      <path d="M166 608h3M173 608h4" stroke="#fff" strokeWidth="2" />
      <path d="M181 500h1282v599H181z" stroke={frame} strokeWidth="2" />
      <path d={`M${bx} 500v599`} strokeWidth="2" />
      {h.map((y) => (
        <path key={y} d={`M${bx} ${y + 0.5}h73`} />
      ))}
      <path d="M1405.500 721v38M1447.500 721v38M1410.500 805v17M1410.500 859v79M1437.500 859v79M1426.500 1075v16" />
      <path d="M1432 807h9v4h-9zM1432 815h9v4h-9zM1396 1092h58v4h-58z" fill="#fff" stroke="none" />
      <path d="M1425 761.500h3M1437.500 771v3" stroke="#fff" />
      <T x={1391} y={503} size={4} anchor="start">GENERAL 说明</T>
      {labels && <SheetLabels />}
    </g>
  );
}

function WallEnds() {
  return (
    <g stroke={GREEN}>
      {[[281, 20], [521, 15], [598, 16], [960, 15], [1038, 15], [1274, 18]].map(([x, w]) => (
        <rect key={x} x={x + 0.5} y="686.500" width={w} height="3" fill="#003c00" />
      ))}
      <path d="M281.500 877.500h20v3h-20zM1274.500 877.500h18v3h-18z" fill="#003c00" />
      <path d="M280.500 687v65h3v-65M280.500 881v-66h3v66M1288.500 687v65h3v-65M1288.500 881v-66h3v66" />
    </g>
  );
}

function Door({ x }) {
  return (
    <g>
      <path d={`M${x + 0.5} 690v-18.500h73V690M${x + 0.5} 672l5 14M${x + 73} 672l-5 14`} stroke="#cfcfcf" />
      <path d={`M${x} 689.500h73`} stroke="#777" />
      <path d={`M${x + 5} 685.500h31M${x + 38} 685.500h32`} stroke="#d8d800" strokeWidth="2" />
    </g>
  );
}

function SideDims({ right }) {
  const cols = right ? [1320, 1329, 1337] : [251, 243, 234];
  const labels = right ? [1317, 1326, 1334] : [248, 240, 231];
  const bubble = right ? 1347 : 224;
  return (
    <g stroke={GREEN}>
      {cols.map((x) => (
        <path key={x} d={`M${x + 0.5} 687v193`} />
      ))}
      {ROWS.map(([name, y]) => (
        <g key={name}>
          <path d={right ? `M1308 ${y + 0.5}h36` : `M229 ${y + 0.5}h${name === "C" || name === "B" ? 31 : 36}`} />
          <path d={cols.map((x) => `M${x - 1} ${y + 2}l3 -3`).join("")} />
          <Bubble x={bubble} y={y}>{name}</Bubble>
        </g>
      ))}
      <path d={right ? "M1313 752.500h12M1313 815.500h12" : "M247 752.500h13M247 815.500h13"} strokeDasharray="7 1" />
      {[[718, "5500"], [750, "500"], [783, "6300"], [816, "500"], [849, "5500"]].map(([y, t]) => (
        <T key={y} x={labels[0]} y={y} rot>{t}</T>
      ))}
      {[[718, "5500"], [783, "7000"], [849, "5500"]].map(([y, t]) => (
        <T key={y} x={labels[1]} y={y} rot>{t}</T>
      ))}
      <T x={labels[2]} y={783} rot>18000</T>
    </g>
  );
}

function Plan() {
  return (
    <g>
      {/* axis bubbles with the three dimension chains above and below */}
      <g stroke={GREEN}>
        <path d="M284 640.500h1006M284 649.500h1006M284 657.500h1006M284 909.500h1006M284 917.500h1006M284 926.500h1006" />
        {AXES.map((x, i) => (
          <g key={x}>
            <path d={`M${x + 0.5} 635v36M${x + 0.5} 897v36`} strokeWidth={i % 2 ? 1 : 2} />
            <path d={`M${x - 1} 651l4 -4M${x - 1} 919l4 -4`} />
            <Bubble x={x} y={630}>{i + 1}</Bubble>
            <Bubble x={x} y={936}>{i + 1}</Bubble>
          </g>
        ))}
        {SUB_TICKS.map((x) => (
          <path key={x} d={`M${x + 0.5} 653v18`} strokeDasharray="13 4" />
        ))}
        <path d="M300.500 897v17M1273.500 897v17" strokeDasharray="1 3 14" />
        {BAYS.map((t, i) => (
          <g key={i}>
            <T x={(AXES[i] + AXES[i + 1]) / 2} y={646}>{t}</T>
            <T x={(AXES[i] + AXES[i + 1]) / 2} y={914}>{t}</T>
          </g>
        ))}
        {SUB_DIMS.map(([x, t]) => (
          <T key={x} x={x} y={654}>{t}</T>
        ))}
        <T x={787} y={637}>96000</T>
        <T x={787} y={906}>93000</T>
        <T x={787} y={923}>96000</T>
        <T x={292} y={906}>1500</T>
        <T x={1281} y={906}>1500</T>
      </g>

      {AXES.slice(1, -1).map((x) => (
        <path key={x} d={`M${x + 0.5} 689v189`} stroke="#6e6e6e" />
      ))}
      <path d="M284.500 752v63M1288.500 752v63" stroke="#555" />
      <path d="M265 746.500h30M265 820.500h30M1267 746.500h41M1267 820.500h41" stroke="#6e6e6e" />

      {/* long walls */}
      <g stroke="#a8a800" fill="#dcdc00">
        <path d="M301.500 686.500h220v3h-220zM614.500 686.500h346v3h-346zM1053.500 686.500h221v3h-221zM301.500 877.500h972v3h-972z" />
      </g>
      <WallEnds />
      <path d="M284 697h1005M284 870h1005" stroke="#00dede" strokeWidth="2" strokeDasharray="26 5" />
      {AXES.map((x) => (
        <path key={x} d={`M${x - 1} 690.500h4M${x - 1} 693.500h4M${x + 0.5} 690v4M${x - 1} 873.500h4M${x - 1} 877.500h4M${x + 0.5} 873v5`} stroke="#fff" />
      ))}

      <Door x={530} />
      <Door x={970} />
      <path d="M280 752l-15 -5v73l15 -4M1292 752l15.500 -5v73l-15.500 -4" stroke="#cfcfcf" />
      <path d="M279.500 751v31M279.500 785v31M1292.500 751v31M1292.500 785v31" stroke="#d8d800" strokeWidth="2" />
      <path d="M316 678.500h-42.500V721M273 678l9 9M272.500 846v42.500H316M273 888l8 -8M1258 678.500h42V721M1300 678l-9 9M1300 846v42.500h-42M1300 888l-8 -8" stroke="#dcdcdc" />
      <path d="M284 746.500h4M288.500 745v4M284 820.500h4M288.500 818v4M1284 746.500h4M1284.500 745v4M1284 820.500h4M1284.500 818v4" stroke="#fff" />

      <SideDims />
      <SideDims right />

      {/* crane */}
      <g stroke="#e800e8">
        <path d="M670.500 694.500h19v6h-19zM675.500 700v166M684.500 700v166M670.500 866.500h19v6h-19z" />
      </g>
      <T x={692} y={768} size={4} rot>10t LD-A型电动单梁桥式起重机 Sn=16.5m</T>

      <g stroke={GREEN}>
        <path d="M870 790.500h16M870 791l4 4 4 -4M870 795h7" />
        <path d="M1321 908.500h16M1321 909l3 3 3 -3" />
        <path d="M237 889.500h25l16 -13" />
        <circle cx="278.500" cy="875.500" r="2" fill="#d8d800" />
      </g>
      <T x={885} y={788}>±0.000</T>
      <T x={1329} y={906}>-0.200</T>
      <T x={248} y={886} size={4}>室外散水做法</T>
      <T x={248} y={893}>详图:JS-06</T>

      <path d="M759 618.500h6.500V625M759 948.500h6.500V942M772 984.500h32" stroke="#0000e8" />
      <T x={757} y={618}>1</T>
      <T x={757} y={946}>1</T>
      <T x={787} y={979}>底层平面图</T>
    </g>
  );
}

function ViewCube() {
  return (
    <g fontFamily="Noto Sans CJK SC" stroke="none" textAnchor="middle">
      <circle cx="1588" cy="247" r="54" fill="none" stroke="#292929" strokeWidth="13" shapeRendering="auto" />
      <rect x="1562.500" y="221.500" width="51" height="51" fill="#a4a4a4" stroke="#6c6c6c" />
      <rect x="1572" y="231" width="32" height="32" fill="#97989f" />
      <text x="1588" y="258" fontSize="31" fill="#4d4f55">上</text>
      <g fontSize="19" fontWeight="500" fill="#929292">
        <text x="1588" y="198">北</text>
        <text x="1588" y="312">南</text>
        <text x="1531" y="255">西</text>
        <text x="1644" y="255">东</text>
      </g>
      <rect x="1564.500" y="334.500" width="47" height="17" rx="4" fill="#75757f" stroke="#9a9aa2" shapeRendering="auto" />
      <text x="1580" y="347" fontSize="11" fill="#3f4046" fontFamily="Noto Sans">WCS</text>
      <path d="M1599 341h7l-3.500 4z" fill="none" stroke="#a9a9b0" />
    </g>
  );
}

function Drawing() {
  return (
    <svg className="absolute inset-0 h-full w-full" fill="none" aria-label="底层平面图" fontFamily="Liberation Sans, Noto Sans CJK SC, sans-serif">
      <g transform="translate(-33 -165)" shapeRendering="crispEdges">
        <Sheet labels />
        <Sheet dy={692} frame="#00f000" />
        <path d="M154.500 1110v71.500h159V1110" stroke="#00c800" />
        <Plan />
        <ViewCube />
        <path d="M59.500 1214v50.500H110M55.500 1259.500h9v9h-9z" stroke="#e8e8e8" />
        <g fill="#e8e8e8" fontFamily="Open Sans" fontWeight="300" fontSize="20" textAnchor="middle">
          <text x="67" y="1210">Y</text>
          <text x="120" y="1263">X</text>
        </g>
        <path d="M1576.500 165v1002M1576.500 1180v111M33 1173.500h1537M1583 1173.500h88M1570.500 1167.500h12v12h-12z" stroke="#fff" />
      </g>
    </svg>
  );
}

/* ---------- command line ---------- */

const HISTORY = [
  ["命令: _textedit", "bg-[#484848] text-[#a5a5a5]"],
  ["当前设置: 编辑模式 = Multiple", "bg-[#565656] text-[#d2d2d2]"],
  ["选择注释对象或 [放弃(U)/模式(M)]: *取消*", "bg-[#616161] text-[#f2f2f2]"],
];

function CommandLine() {
  return (
    <div className="absolute bottom-0 left-[622px] w-[393px]">
      <div className="flex flex-col items-start gap-[5px] pb-[3px] pl-16">
        {HISTORY.map(([text, look]) => (
          <p key={text} className={clsx("flex h-[15px] items-center rounded-xs pr-1 pl-[3px] text-[13px] whitespace-pre", look)}>
            {text.split(/([\x20-\x7e]+)/).map((part, i) => (
              <span key={i} className={i % 2 ? "font-['DejaVu_Sans_Mono'] text-[11px]" : undefined}>{part}</span>
            ))}
          </p>
        ))}
      </div>
      <div className="flex h-[27px] items-center border border-[#222933] bg-[#222933]">
        <svg className="mx-[3px] h-[18px] w-[7px]" aria-hidden="true">
          <path d="M1 0v18M4 0v18" stroke="#a8a8a8" strokeWidth="2" strokeDasharray="2 1" />
        </svg>
        <button type="button" aria-label="close command line" className="flex w-[14px] items-center justify-center">
          <svg viewBox="0 0 8 8" className="size-2" aria-hidden="true"><path d="M0 0l8 8M8 0L0 8" stroke="#b8b8b8" strokeWidth="1.500" /></svg>
        </button>
        <button type="button" aria-label="customize command line" className="mr-[3px] ml-2 flex w-5 items-center">
          <svg viewBox="0 0 16 16" className="size-4" aria-hidden="true">
            <path d="M1 15L9 7" stroke="#a8a8a8" strokeWidth="3" strokeLinecap="round" />
            <path d="M12 0c-4 0-5 4-3 6 1 3 6 3 7-1l-3 1-2-2z" fill="#a8a8a8" />
          </svg>
        </button>
        <div className="flex h-full min-w-0 flex-1 items-center bg-[#b2b2b2] px-[3px]">
          <svg viewBox="0 0 16 13" className="h-[13px] w-4 shrink-0" fill="none" aria-hidden="true">
            <path d="M.5 .5h15v12H.5z" stroke="#3c3c3c" />
            <path d="M0 1.500h16" stroke="#3c3c3c" strokeWidth="3" />
            <path d="M3 5l3 2-3 2M7 9.500h3" stroke="#3c3c3c" />
          </svg>
          <button type="button" aria-label="recent commands" className="flex w-4 items-center justify-center"><Arrow color="#3c3c3c" /></button>
          <input type="text" aria-label="命令" placeholder="键入命令" className="h-full min-w-0 flex-1 bg-transparent text-[13px] italic outline-none placeholder:text-[#555]" />
          <button type="button" aria-label="command history" className="flex w-2 items-center justify-center"><Arrow color="#3c3c3c" up /></button>
        </div>
      </div>
    </div>
  );
}

/* ---------- bottom rows ---------- */

function LayoutTabs() {
  const [active, setActive] = useState("模型");
  return (
    <div className="flex h-6 shrink-0 items-center pl-[19px] text-white">
      <Tool name="menu" className="mr-[9px] w-4" />
      <button type="button" onClick={() => setActive("模型")} className={clsx("h-full w-[58px] font-bold [clip-path:polygon(10px_0,100%_0,calc(100%-10px)_100%,0_100%)]", active === "模型" && "bg-[#3c4452]")}>
        模型
      </button>
      {["布局1", "布局2"].map((name) => (
        <span key={name} className="flex items-center">
          <button type="button" onClick={() => setActive(name)} className="w-[46px]">{name}</button>
          <Slash />
        </span>
      ))}
      <Tool name="plus" className="mr-[13px] ml-[10px] w-4" />
      <Slash />
    </div>
  );
}

// g is the gap in pixels that sets a cell apart from the one on its left
const STATUS = [
  { n: "grid", g: 3 }, { n: "snap", on: true }, { n: "v" },
  { n: "infer", g: 3 }, { n: "dyn", g: 1, on: true }, { n: "ortho", g: 1, on: true },
  { n: "polar", g: 1 }, { n: "v" }, { n: "iso", g: 1 }, { n: "v" },
  { n: "track", g: 1 }, { n: "osnap", on: true }, { n: "v" },
  { n: "lweight", g: 1 }, { n: "transp", g: 1, on: true }, { n: "cycling", g: 1 },
  { n: "osnap3d", g: 1 }, { n: "v" },
  { n: "ducs", g: 3, on: true }, { n: "filter" }, { n: "v" }, { n: "gizmo", on: true }, { n: "v" },
  { n: "annVis", g: 3, on: true }, { n: "annAuto" }, { n: "annScale" }, { t: "1:1 / 100%" }, { n: "v" },
  { n: "gear", g: 3 }, { n: "v" }, { n: "plus", g: 1 },
  { n: "ruler", g: 3 }, { t: "小数", left: true }, { n: "v" }, { n: "quick", g: 1 },
  { n: "lockUi", g: 3 }, { n: "v" }, { n: "isolate", g: 1 },
  { n: "perf", g: 3, on: true }, { n: "notice", g: 3, wide: true }, { n: "fullView", g: 3 }, { n: "menu", g: 1 },
];

function StatusBar() {
  return (
    <footer className="flex shrink-0 items-stretch px-[5px] pt-[6px] pb-[5px] text-white">
      <div className="h-6 min-w-0 flex-1 bg-[#3c4452]" />
      <div className="ml-1 flex w-[210px] shrink-0 items-center justify-end bg-[#3c4452] pr-[5px] font-['Roboto'] text-xs">138302.6635, -87629.3612, 0.0000</div>
      <button type="button" className="ml-[3px] w-[30px] shrink-0 bg-[#3c4452]">模型</button>
      {STATUS.map(({ n, g, t, on, wide, left }, i) => {
        const gap = g === 3 ? "ml-[3px]" : g === 1 ? "ml-px" : "";
        if (t) {
          return <button key={i} type="button" className={clsx("w-[57px] shrink-0 bg-[#3c4452] font-['Roboto','Noto_Sans_CJK_SC'] whitespace-nowrap", left && "pl-[6px] text-left")}>{t}</button>;
        }
        if (n === "v") return <div key={i} className="flex w-4 shrink-0 items-center justify-center bg-[#3c4452]"><Drop /></div>;
        return (
          <button key={i} type="button" aria-label={n} aria-pressed={!!on} className={clsx("flex h-6 shrink-0 items-center justify-center", gap, wide ? "w-[30px]" : "w-6", on ? "border border-[#3c4452] bg-[#5e8fc6]" : "bg-[#3c4452]")}>
            <Icon name={n} />
          </button>
        );
      })}
    </footer>
  );
}

export default function App() {
  return (
    <div className="flex min-h-screen flex-col overflow-hidden rounded-lg border border-[#0b8fd6] bg-[#222933] font-['Noto_Sans','Noto_Sans_CJK_SC',sans-serif] text-xs text-[#e6e6e6]">
      <TitleBar />
      <MenuBar />
      <FileTabs />

      <div className="mx-[3px] flex flex-1 flex-col bg-[#3c4452] pb-1">
        <div className="flex shrink-0 flex-col gap-[3px] py-1">
          <div className="flex gap-px">
            <Bar items="new open save | print preview publish dwf | cut copy paste match blockEdit | undo v redo v | pan zoomRt zoomWin zoomPrev | props design palettes sheetSet markup calc | help" />
            <Bar>
              <Tools items="layerProps" />
              <Combo label="图层" value="品红线" className="ml-px w-[300px]" pad="pl-[96px]">
                <LayerGlyphs />
              </Combo>
              <Tools items="layerCurrent layerPrev layerStates" />
            </Bar>
            <Bar>
              <Combo label="颜色" value="ByLayer" className="w-[151px]" pad="pl-[19px]">
                <span className="pointer-events-none absolute top-[3px] left-[2px] size-[13px] border border-[#555] bg-[#ff00ff]" />
              </Combo>
              <Tools items="|" />
              <Combo label="线型" value="ByLayer" className="w-[160px]" pad="pl-[68px]">
                <span className="pointer-events-none absolute top-[9px] left-1 h-px w-[60px] bg-black" />
              </Combo>
              <Tools items="|" />
              <Combo label="线宽" value="ByLayer" className="w-[125px]" pad="pl-[43px]">
                <span className="pointer-events-none absolute top-[8px] left-1 h-px w-[34px] bg-black" />
              </Combo>
              <Tools items="|" />
              <Combo label="打印样式" value="ByColor" className="w-[119px]" pad="pl-[8px]" dim />
            </Bar>
          </div>
          <div className="flex gap-px">
            <Bar items="dimLinear dimAligned dimArc dimOrd | dimRadius dimJog dimDia dimAngular | dimQuick dimBase dimCont dimSpace dimBreak | tolerance center inspect jogLine | dimEdit dimText dimUpdate |">
              <Combo label="标注样式" value="100" className="ml-px w-[119px]" pad="pl-[17px]" />
              <Tools items="dimStyle" />
            </Bar>
            <Bar items="union subtract intersect | extrudeFace moveFace offsetFace deleteFace rotateFace taperFace copyFace colorFace | filletEdge chamferEdge copyEdge colorEdge | imprint clean separate shell check" />
          </div>
          <div className="flex">
            <Bar items="bookEdit bookCheck layerDelete" />
          </div>
        </div>

        <main className="flex flex-1 gap-1 pr-[3px]">
          <SideBar items="line xline pline polygon rect arc circle cloud spline ellipse ellipseArc insertBlock makeBlock point hatch gradient region table mtext addSel" />
          <div className="relative min-w-0 flex-1 overflow-hidden bg-black">
            <Drawing />
            <CommandLine />
          </div>
          <SideBar items="erase copyObj mirror offset array move rotate scale stretch trim extend breakAt breakObj join chamfer fillet blend explode" />
        </main>
      </div>

      <LayoutTabs />
      <StatusBar />
    </div>
  );
}
